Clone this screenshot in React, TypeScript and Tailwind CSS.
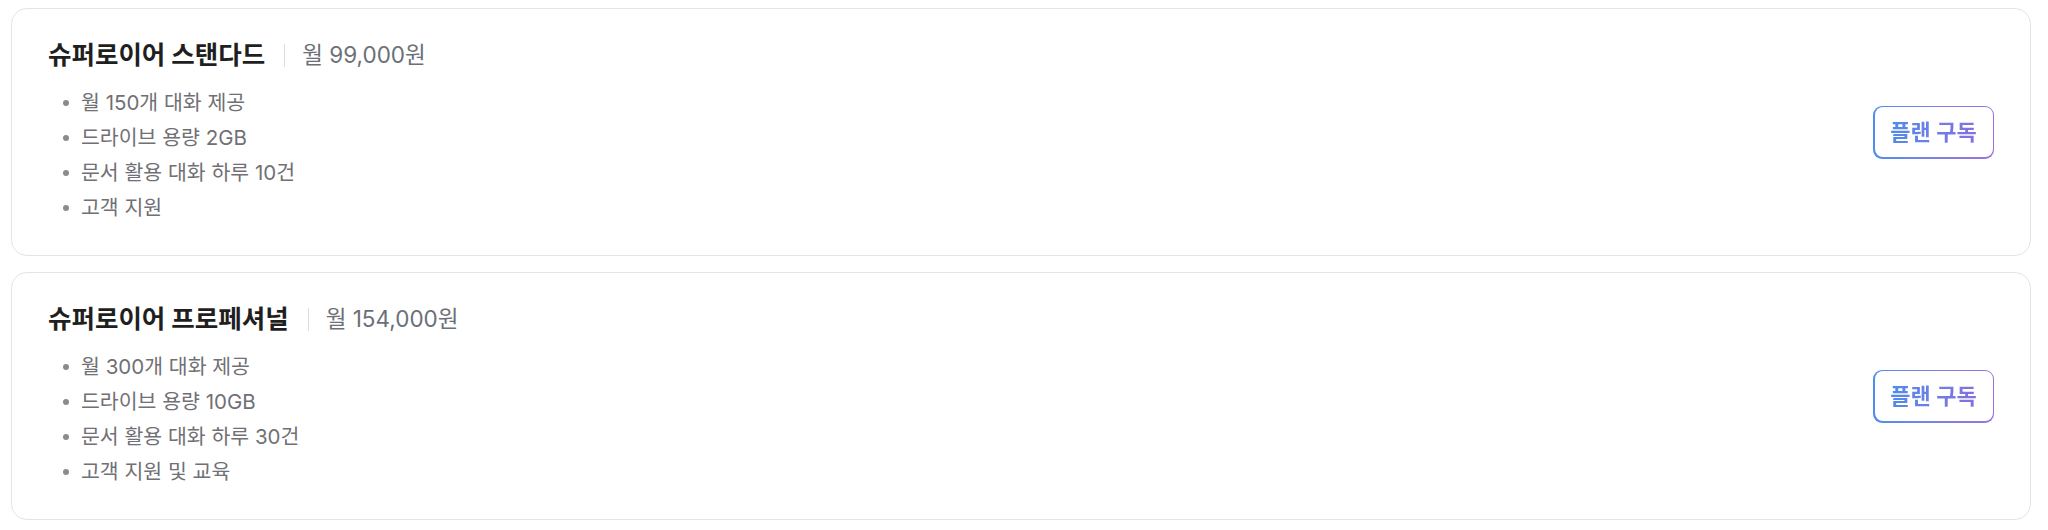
import React from "react";

const plans = [
  {
    name: "슈퍼로이어 스탠다드",
    price: "월 99,000원",
    features: ["월 150개 대화 제공", "드라이브 용량 2GB", "문서 활용 대화 하루 10건", "고객 지원"],
  },
  {
    name: "슈퍼로이어 프로페셔널",
    price: "월 154,000원",
    features: ["월 300개 대화 제공", "드라이브 용량 10GB", "문서 활용 대화 하루 30건", "고객 지원 및 교육"],
  },
];

export default function App() {
  return (
    <div
      className="w-[2048px] h-[530px] bg-white pt-[8px] pl-[11px] pr-[17px] flex flex-col gap-[16px]"
      style={{ fontFamily: 'Inter, "Noto Sans CJK KR", sans-serif' }}
    >
      {plans.map((p) => (
        <div
          key={p.name}
          className="h-[248px] border border-[#e4e4e7] rounded-[16px] px-[36px] py-[30px] flex items-center justify-between"
        >
          <div className="flex flex-col gap-[14px]">
            <div className="flex items-center h-[32px]">
              <span className="text-[25.5px] font-bold text-[#1f1f1f] leading-[32px]">{p.name}</span>
              <span className="w-px h-[23px] bg-[#dcdcdf] ml-[19px] mr-[17px]" />
              <span className="text-[22.5px] text-[#6b7078] leading-[32px]">{p.price}</span>
            </div>
            <ul className="flex flex-col pl-[15px]">
              {p.features.map((f) => (
                <li key={f} className="flex items-center h-[35px] gap-[12px]">
                  <span className="w-[6px] h-[6px] rounded-full bg-[#8a8a8f]" />
                  <span className="text-[20.5px] text-[#707075] leading-[35px]">{f}</span>
                </li>
              ))}
            </ul>
          </div>
          <div className="rounded-[9px] p-[1.5px] bg-linear-to-r from-[#4c8ef0] to-[#9a72dc]">
            <button className="w-[118px] h-[50px] rounded-[8px] bg-white flex items-center justify-center">
              <span className="text-[22px] font-semibold bg-linear-to-r from-[#4f8aee] to-[#8470e0] bg-clip-text text-transparent">
                플랜 구독
              </span>
            </button>
          </div>
        </div>
      ))}
    </div>
  );
}
